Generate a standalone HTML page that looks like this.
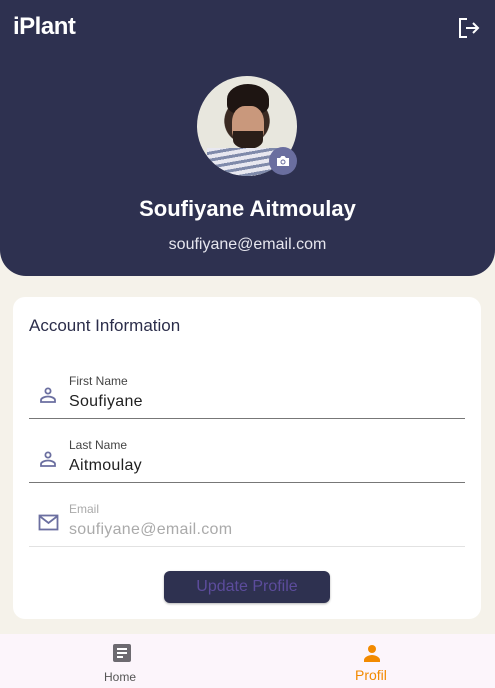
<!DOCTYPE html><html><head><style>
*{margin:0;padding:0;box-sizing:border-box}
body{width:495px;height:688px;background:#f5f2ea;font-family:"Liberation Sans",sans-serif;position:relative;overflow:hidden}
.hdr{position:absolute;left:0;top:0;width:495px;height:276px;background:#2e3150;border-radius:0 0 26px 26px}
.abs{position:absolute}
.card{position:absolute;left:13px;top:297px;width:468px;height:322px;background:#fff;border-radius:12px}
.lbl{position:absolute;left:69px;font-size:12px;color:#444}
.val{position:absolute;left:69px;font-size:16px;color:#1f1f1f;letter-spacing:.3px}
.line{position:absolute;left:29px;width:436px;height:1px;background:#777}
.nav{position:absolute;left:0;top:634px;width:495px;height:54px;background:#fcf5fb}
</style></head><body>
<div class="hdr">
<div class="abs" style="left:13px;top:13px;color:#fff;font-weight:bold;font-size:24px;letter-spacing:-0.5px">iPlant</div>
<svg class="abs" style="left:458px;top:17px" width="22" height="22" viewBox="0 0 22 22" fill="none" stroke="#fff" stroke-width="2"><path d="M9 2H2v18h7M8 11h12M15 6l5 5-5 5"/></svg>
<div class="abs" style="left:197px;top:76px;width:100px;height:100px;border-radius:50%;background:radial-gradient(circle at 50% 45%,#b89078 0 18%,#3a2a22 19% 30%,#e8e7de 31%);overflow:hidden">
<div class="abs" style="left:30px;top:8px;width:42px;height:30px;border-radius:50% 50% 30% 30%;background:#1e1512"></div>
<div class="abs" style="left:35px;top:30px;width:32px;height:40px;border-radius:40%;background:#c9987c"></div>
<div class="abs" style="left:36px;top:55px;width:30px;height:18px;border-radius:0 0 50% 50%;background:#2a1e18"></div>
<div class="abs" style="left:10px;top:72px;width:80px;height:30px;background:repeating-linear-gradient(170deg,#e8e8f0 0 4px,#7f8aaa 4px 7px)"></div>
</div>
<div class="abs" style="left:269px;top:147px;width:28px;height:28px;border-radius:50%;background:#6a6e9f"></div>
<svg class="abs" style="left:275px;top:153px" width="16" height="16" viewBox="0 0 16 16"><path d="M2 5h3l1.5-2h3L11 5h3v8H2z" fill="#fff"/><circle cx="8" cy="9" r="2.5" fill="#6a6e9f"/><circle cx="8" cy="9" r="1.5" fill="#fff"/></svg>
<div class="abs" style="left:0;width:495px;top:196px;text-align:center;color:#fff;font-weight:bold;font-size:22px">Soufiyane Aitmoulay</div>
<div class="abs" style="left:0;width:495px;top:236px;text-align:center;color:#e6e6ee;font-size:16px">soufiyane@email.com</div>
</div>
<div class="card"></div>
<div class="abs" style="left:29px;top:316px;font-size:17px;color:#2b2d4a">Account Information</div>
<svg class="abs" style="left:39px;top:386px" width="18" height="18" viewBox="0 0 18 18" fill="none" stroke="#6b6fa0" stroke-width="1.8"><circle cx="9" cy="5" r="2.6"/><path d="M2 16v-2c0-2 4-3.5 7-3.5s7 1.5 7 3.5v2z"/></svg>
<div class="lbl" style="top:374px">First Name</div><div class="val" style="top:393px">Soufiyane</div><div class="line" style="top:418px"></div>
<svg class="abs" style="left:39px;top:450px" width="18" height="18" viewBox="0 0 18 18" fill="none" stroke="#6b6fa0" stroke-width="1.8"><circle cx="9" cy="5" r="2.6"/><path d="M2 16v-2c0-2 4-3.5 7-3.5s7 1.5 7 3.5v2z"/></svg>
<div class="lbl" style="top:438px">Last Name</div><div class="val" style="top:457px">Aitmoulay</div><div class="line" style="top:482px"></div>
<svg class="abs" style="left:38px;top:514px" width="22" height="18" viewBox="0 0 22 18" fill="none" stroke="#6b6fa0" stroke-width="1.8"><rect x="1.5" y="1.5" width="18" height="14"/><path d="M1.5 2l9 7 9-7"/></svg>
<div class="lbl" style="top:502px;color:#aaa">Email</div><div class="val" style="top:521px;color:#aaa">soufiyane@email.com</div><div class="line" style="top:546px;background:#e2e2e2"></div>
<div class="abs" style="left:164px;top:571px;width:166px;height:32px;border-radius:6px;background:#2e3150;color:#5c4c9c;font-size:16px;text-align:center;line-height:32px;box-shadow:0 1px 2px rgba(0,0,0,.3)">Update Profile</div>
<div class="nav"></div>
<svg class="abs" style="left:112px;top:643px" width="20" height="20" viewBox="0 0 20 20"><rect x="1" y="1" width="18" height="18" rx="2" fill="#6d6a70"/><path d="M5 6h10M5 10h10M5 14h6" stroke="#fff" stroke-width="2"/></svg>
<div class="abs" style="left:104px;top:670px;font-size:12px;color:#555">Home</div>
<svg class="abs" style="left:362px;top:643px" width="20" height="20" viewBox="0 0 20 20" fill="#f28a00"><circle cx="10" cy="6" r="4"/><path d="M2 19v-2c0-3 5-5 8-5s8 2 8 5v2z"/></svg>
<div class="abs" style="left:355px;top:667px;font-size:14px;color:#f28a00">Profil</div>
</body></html>
